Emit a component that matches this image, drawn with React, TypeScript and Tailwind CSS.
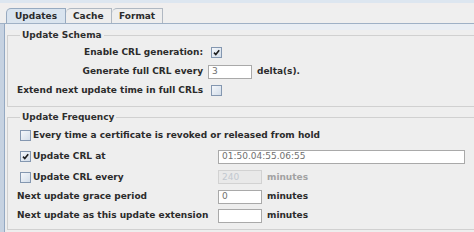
import React from "react";

// ─── Small Swing-like widgets ─────────────────────────────────────────────────

function Check({ on = false }: { on?: boolean }) {
  return (
    <span className="flex items-center justify-center w-[11px] h-[11px] shrink-0 border border-[#8497b0] bg-gradient-to-br from-[#f4f7fb] to-[#d3dde9]">
      {on && (
        <svg width="7" height="7" viewBox="0 0 7 7">
          <path d="M1 3.6 L2.8 5.6 L6.2 1.2" fill="none" stroke="#1d1d1d" strokeWidth="1.6" />
        </svg>
      )}
    </span>
  );
}

function Field({
  value = "",
  w = "w-[44px]",
  disabled = false,
}: {
  value?: string;
  w?: string;
  disabled?: boolean;
}) {
  return (
    <div
      className={`${w} h-[14px] shrink-0 flex items-center px-[3px] border font-normal text-[9px] leading-none ${
        disabled
          ? "bg-[#e9e9e9] border-[#d2d2d2] text-[#c2c8d0]"
          : "bg-white border-[#a9a9a9] text-[#707070]"
      }`}
    >
      {value}
    </div>
  );
}

function Group({ title, children }: { title: string; children: React.ReactNode }) {
  return (
    <fieldset className="border border-[#d0d0d0] border-r-0 mr-[-20px] pl-[9px] pt-[2px]">
      <legend className="ml-[3px] px-[2px] h-[11px] leading-[11px] text-[#2e2e2e]">
        {title}
      </legend>
      {children}
    </fieldset>
  );
}

// ─── Page ─────────────────────────────────────────────────────────────────────

export default function App() {
  return (
    <div className="w-[474px] h-[232px] overflow-hidden bg-[#eeeeee] text-[#2b2b2b] font-['DejaVu_Sans',sans-serif] font-bold text-[9px] leading-none">
      {/* ── top strip ── */}
      <div className="h-[3px] bg-[#dde6f0]" />
      <div className="h-[5px] bg-[#f0eeee]" />

      {/* ── tabs ── */}
      <div className="flex h-[15px] pl-[6px] bg-[#efefef]">
        <div className="w-[60px] h-[15px] pl-[8px] flex items-center bg-[#d9e4ef] border border-b-0 border-[#97aac0] rounded-tl-[5px]">
          Updates
        </div>
        <div className="w-[46px] h-[15px] pl-[7px] flex items-center bg-[#eeeeee] border border-l-0 border-b-0 border-[#b0b8c2] rounded-tl-[5px]">
          Cache
        </div>
        <div className="w-[51px] h-[15px] pl-[7px] flex items-center bg-[#eeeeee] border border-l-0 border-b-0 border-[#b0b8c2] rounded-tl-[5px]">
          Format
        </div>
      </div>
      <div className="h-[1px] bg-[#9fb1c6]" />

      {/* ── panel ── */}
      <div className="flex">
        <div className="w-[5px] h-[208px] shrink-0 bg-[#c6d2e1] border-r border-[#94a9c3]" />
        <div className="flex-1 pl-[2px] pt-[6px] bg-[#eeeeee]">
          <div className="h-[6px] -mt-[6px] bg-[#e9eef4]" />

          <Group title="Update Schema">
            <div className="h-[19px] flex items-center">
              <span className="w-[186px] text-right">Enable CRL generation:</span>
              <span className="ml-[8px]"><Check on /></span>
            </div>
            <div className="h-[19px] flex items-center">
              <span className="w-[186px] text-right">Generate full CRL every</span>
              <span className="ml-[5px]"><Field value="3" /></span>
              <span className="ml-[5px]">delta(s).</span>
            </div>
            <div className="h-[19px] flex items-center mb-[6px]">
              <span className="w-[186px] text-right">Extend next update time in full CRLs</span>
              <span className="ml-[8px]"><Check /></span>
            </div>
          </Group>

          <div className="h-[5px]" />

          <Group title="Update Frequency">
            <div className="h-[21px] flex items-center pl-[3px] gap-[2px]">
              <Check />
              <span>Every time a certificate is revoked or released from hold</span>
            </div>
            <div className="h-[21px] flex items-center">
              <span className="w-[201px] flex items-center pl-[3px] gap-[2px]">
                <Check on />
                <span>Update CRL at</span>
              </span>
              <Field value="01:50.04:55.06:55" w="w-[247px]" />
            </div>
            <div className="h-[20px] flex items-center">
              <span className="w-[201px] flex items-center pl-[3px] gap-[2px]">
                <Check />
                <span>Update CRL every</span>
              </span>
              <Field value="240" disabled />
              <span className="ml-[5px] text-[#a2a2a2]">minutes</span>
            </div>
            <div className="h-[19px] flex items-center">
              <span className="w-[201px]">Next update grace period</span>
              <Field value="0" />
              <span className="ml-[5px]">minutes</span>
            </div>
            <div className="h-[19px] flex items-center mb-[4px]">
              <span className="w-[201px]">Next update as this update extension</span>
              <Field />
              <span className="ml-[5px]">minutes</span>
            </div>
          </Group>
        </div>
      </div>
    </div>
  );
}
